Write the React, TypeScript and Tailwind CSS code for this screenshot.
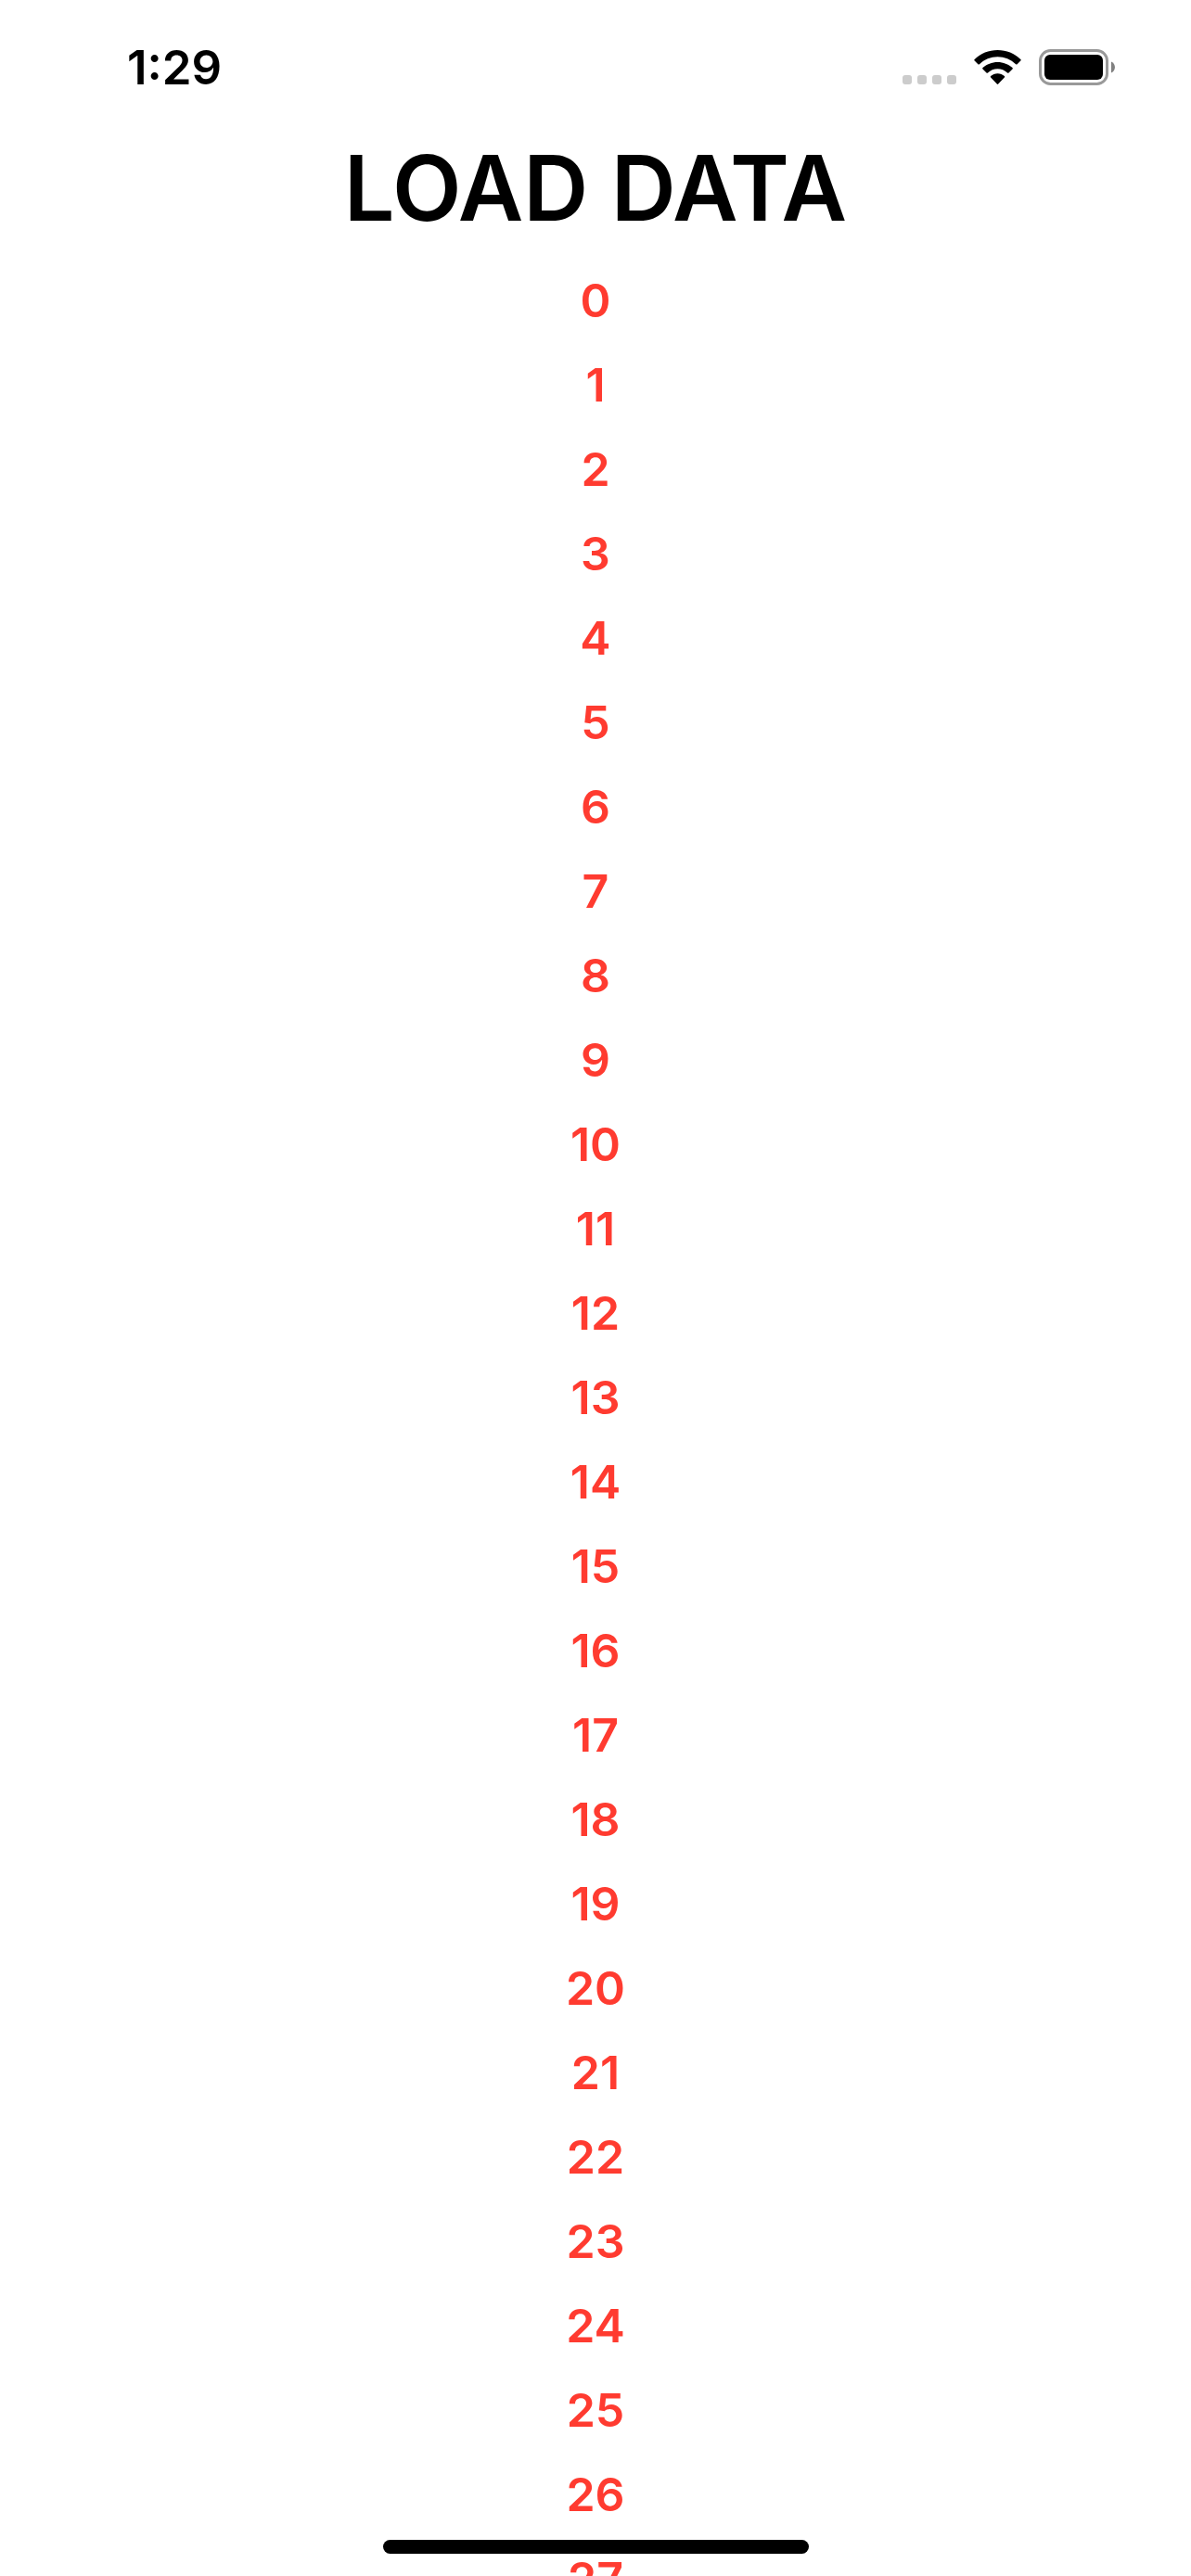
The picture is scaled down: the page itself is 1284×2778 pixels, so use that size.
const rows = Array.from({ length: 28 }, (_, i) => i);

function StatusBar() {
  return (
    <header className="flex h-[146px] items-center justify-between pl-[137px] pr-[82px]">
      <time className="text-[51px] leading-[60px] font-semibold">1:29</time>
      <div className="flex items-center gap-[19px]">
        <svg width="58" height="38" viewBox="0 0 58 38" aria-label="No signal" role="img">
          {[0, 16, 32, 48].map((x) => (
            <rect key={x} x={x} y="27" width="10" height="10" rx="3" fill="#cccccc" />
          ))}
        </svg>
        <svg width="51" height="38" viewBox="0 0 51 38" aria-label="Wi-Fi" role="img">
          <path d="M25.5 0C35 0 43.8 3.6 50.3 9.9Q51.1 10.6 50.3 11.4L46.600 15.200Q45.900 15.900 45.100 15.200C39.800 10.200 32.900 7.300 25.500 7.300S11.200 10.200 5.900 15.200Q5.100 15.900 4.400 15.200L.7 11.400Q-.1 10.600.7 9.900C7.200 3.600 16 0 25.500 0Z" />
          <path d="M25.500 12.900C31.600 12.900 37.200 15.200 41.500 19Q42.300 19.700 41.500 20.500L37.500 24.400Q36.800 25.100 36 24.400C33.200 21.900 29.500 20.300 25.500 20.300S17.800 21.900 15 24.400Q14.200 25.100 13.500 24.400L9.500 20.500Q8.700 19.700 9.500 19C13.800 15.200 19.400 12.900 25.500 12.900Z" />
          <path d="M25.500 25.300C28.300 25.300 30.900 26.400 32.900 28.100Q33.600 28.800 32.900 29.500L26.200 36.600Q25.500 37.300 24.800 36.600L18.100 29.500Q17.400 28.800 18.100 28.100C20.100 26.400 22.700 25.300 25.500 25.300Z" />
        </svg>
        <svg width="82" height="40" viewBox="0 0 82 40" aria-label="Battery full" role="img">
          <rect x="1.500" y="1.500" width="72" height="36" rx="11" fill="none" stroke="#999999" strokeWidth="3" />
          <rect x="6" y="6" width="63" height="27" rx="6" />
          <path d="M78 13.500C83.300 15.500 83.300 23.500 78 25.500Z" fill="#808080" />
        </svg>
      </div>
    </header>
  );
}

export default function App() {
  return (
    <div className="relative h-screen overflow-hidden bg-white text-black font-[Inter,sans-serif]">
      <StatusBar />
      <main className="flex flex-col items-center">
        <button type="button" className="text-[97px] leading-[113px] font-semibold">LOAD DATA</button>
        <ul className="mt-[20px] text-center text-[50px] leading-[91px] font-semibold text-[#ff3b30]">
          {rows.map((n) => (
            <li key={n}>{n}</li>
          ))}
        </ul>
      </main>
      <div className="absolute inset-x-0 bottom-6 mx-auto h-[15px] w-[459px] rounded-full bg-black" />
    </div>
  );
}
